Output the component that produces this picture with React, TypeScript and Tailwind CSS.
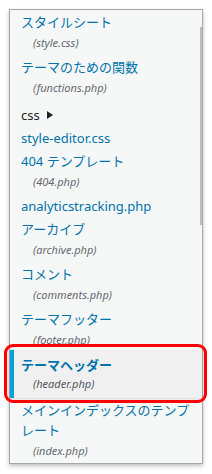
import React from 'react';

type FileItem = { title: string; file?: string; current?: boolean };

const before: FileItem[] = [
  { title: 'スタイルシート', file: 'style.css' },
  { title: 'テーマのための関数', file: 'functions.php' },
];

const after: FileItem[] = [
  { title: 'style-editor.css' },
  { title: '404 テンプレート', file: '404.php' },
  { title: 'analyticstracking.php' },
  { title: 'アーカイブ', file: 'archive.php' },
  { title: 'コメント', file: 'comments.php' },
  { title: 'テーマフッター', file: 'footer.php' },
  { title: 'テーマヘッダー', file: 'header.php', current: true },
  { title: 'メインインデックスのテンプレート', file: 'index.php' },
];

const Item: React.FC<{ item: FileItem }> = ({ item }) => {
  if (item.current) {
    return (
      <li className="relative -mt-[2px]">
        <div className="bg-[#f0f0f1] border-l-[4px] border-[#0a9fd5] pl-[7px] pr-1 pt-[5px] pb-[5px] shadow-[0_1px_2px_rgba(0,0,0,0.12)]">
          <div className="text-[13px] leading-[20px] font-bold text-[#0073aa]">{item.title}</div>
          <div className="pl-[12px] text-[11px] leading-[18px] italic text-[#50575e]">({item.file})</div>
        </div>
        <div className="absolute -left-[6px] -right-[5px] -top-[6px] -bottom-[5px] border-[3px] border-[#f00] rounded-[9px] pointer-events-none" />
      </li>
    );
  }
  return (
    <li className="pl-[11px] pr-1 pt-[2px] pb-[1px]">
      <div className="text-[13px] leading-[20px] text-[#0073aa]">{item.title}</div>
      {item.file && (
        <div className="pl-[12px] mt-[2px] mb-[2px] text-[11px] leading-[18px] italic text-[#646970]">({item.file})</div>
      )}
    </li>
  );
};

export default function App() {
  return (
    <div
      className="w-[212px] h-[474px] bg-white pt-[9px] pl-[9px]"
      style={{ fontFamily: '"Noto Sans", "Noto Sans CJK JP", sans-serif' }}
    >
      <div className="relative w-[194px] h-[455px] bg-[#f6f7f7] border border-[#a7a7a7] shadow-[0_2px_4px_rgba(0,0,0,0.25)]">
        <div className="absolute right-0 top-[17px] w-[2px] h-[198px] bg-[#bdbdbd]" />
        <ul className="pt-0">
          {before.map((it) => (
            <Item key={it.title} item={it} />
          ))}
          <li className="pl-[11px] mt-[3px] pt-[2px] pb-[1px] flex items-center gap-[7px] text-[13px] leading-[20px] text-[#1d2327]">
            <span>css</span>
            <span className="w-0 h-0 border-y-[4px] border-y-transparent border-l-[6px] border-l-[#1d2327]" />
          </li>
          {after.map((it) => (
            <Item key={it.title} item={it} />
          ))}
        </ul>
      </div>
    </div>
  );
}
